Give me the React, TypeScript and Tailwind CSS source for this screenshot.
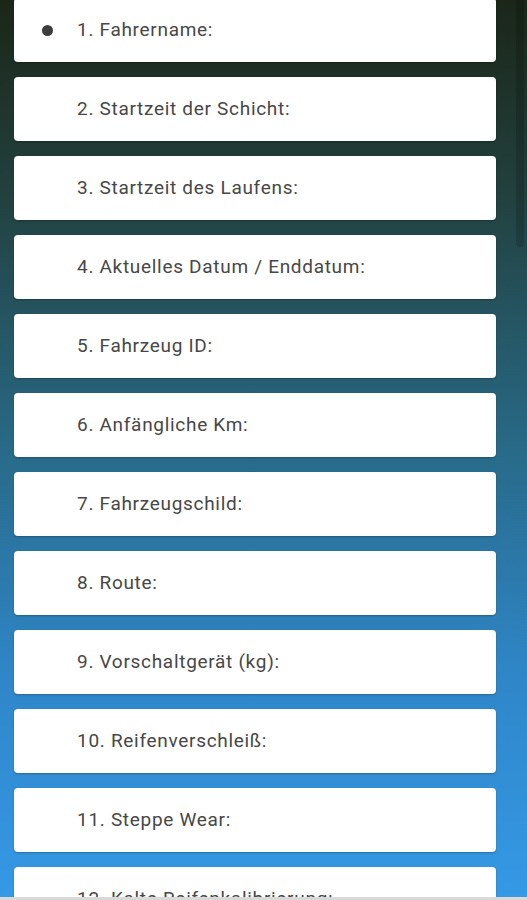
const items = [
  "1. Fahrername:",
  "2. Startzeit der Schicht:",
  "3. Startzeit des Laufens:",
  "4. Aktuelles Datum / Enddatum:",
  "5. Fahrzeug ID:",
  "6. Anfängliche Km:",
  "7. Fahrzeugschild:",
  "8. Route:",
  "9. Vorschaltgerät (kg):",
  "10. Reifenverschleiß:",
  "11. Steppe Wear:",
  "12. Kalte Reifenkalibrierung:",
];

export default function App() {
  return (
    <div className="relative h-[900px] w-[527px] overflow-hidden bg-[linear-gradient(180deg,#1b2618_0%,#22413f_22%,#286a88_50%,#2f86c8_75%,#3599e6_100%)] font-['Roboto',sans-serif]">
      <div className="flex flex-col gap-[15px] pl-[14px] pr-[31px] mt-[-2px]">
        {items.map((label, i) => (
          <div
            key={label}
            className="flex h-[64px] items-center rounded-[4px] bg-white shadow-[0_1px_2px_rgba(0,0,0,0.25)]"
          >
            <div className="flex w-[63px] shrink-0 items-center pl-[28px]">
              {i === 0 && <span className="block h-[11px] w-[11px] rounded-full bg-[#3d3d3d]" />}
            </div>
            <span className="text-[19px] tracking-[0.7px] text-[#474747]">{label}</span>
          </div>
        ))}
      </div>
      <div className="absolute right-[3px] top-0 h-[247px] w-[8px] rounded-b-[4px] bg-black/15" />
      <div className="absolute bottom-0 left-0 h-[3px] w-full bg-[#d9d9d9]" />
    </div>
  );
}
